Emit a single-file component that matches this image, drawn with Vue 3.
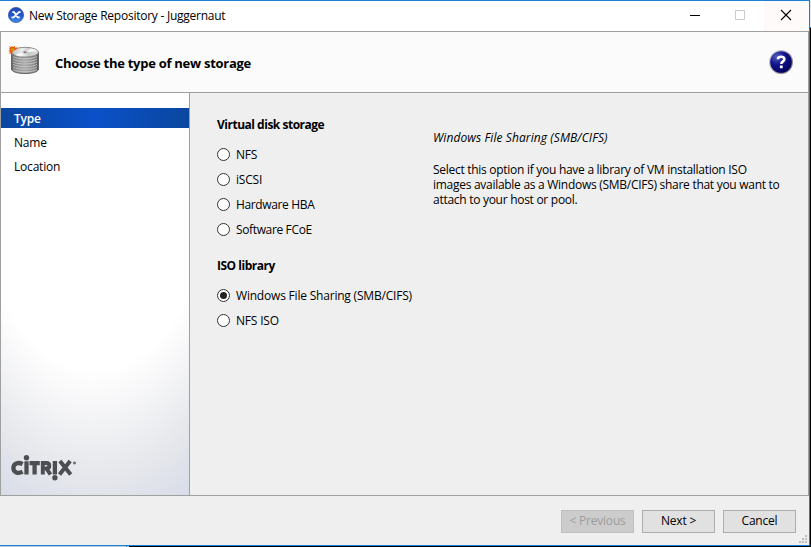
<script setup>
import { ref } from 'vue'

const steps = ['Type', 'Name', 'Location']
const active = ref('Type')
const selected = ref('cifs')
const groups = [
  {
    title: 'Virtual disk storage',
    cls: 'disk',
    options: [
      { id: 'nfs', label: 'NFS' },
      { id: 'iscsi', label: 'iSCSI' },
      { id: 'hba', label: 'Hardware HBA' },
      { id: 'fcoe', label: 'Software FCoE' },
    ],
  },
  {
    title: 'ISO library',
    cls: 'iso',
    options: [
      { id: 'cifs', label: 'Windows File Sharing (SMB/CIFS)' },
      { id: 'nfsiso', label: 'NFS ISO' },
    ],
  },
]
const description = [
  'Select this option if you have a library of VM installation ISO',
  'images available as a Windows (SMB/CIFS) share that you want to',
  'attach to your host or pool.',
]
const platterEdges = [0, 1, 2, 3, 4, 5]
</script>

<template>
  <div class="desktop">
    <div class="window">
      <header class="titlebar">
        <svg class="app-icon" width="16" height="16" viewBox="0 0 16 16">
          <defs>
            <linearGradient id="appBlue" x1="0" y1="0" x2="0" y2="1">
              <stop offset="0" stop-color="#2348b4" />
              <stop offset="0.55" stop-color="#2458cf" />
              <stop offset="1" stop-color="#3f92ee" />
            </linearGradient>
          </defs>
          <circle cx="8" cy="8" r="7.6" fill="url(#appBlue)" stroke="#2a4c9c" stroke-width=".7" />
          <path d="M4.300 5.200h1.900L9.600 10.300h2.100M12.600 5.200h-1.800L5.800 10.300H3.500" fill="none" stroke="#fff" stroke-width="1.700" />
        </svg>
        <span class="title">New Storage Repository - Juggernaut</span>
        <div class="controls">
          <span class="control"><svg width="12" height="12"><path d="M1 6.5h10" stroke="#000" /></svg></span>
          <span class="control"><svg width="12" height="12"><path d="M1.5 1.5h9v9h-9z" fill="none" stroke="#ccc" /></svg></span>
          <span class="control close"><svg width="12" height="12"><path d="M1 1l10 10M11 1L1 11" stroke="#000" stroke-width="1.1" /></svg></span>
        </div>
      </header>

      <section class="banner">
        <svg class="disk-icon" width="32" height="32" viewBox="0 0 32 32">
          <defs>
            <linearGradient id="side" x1="0" x2="1">
              <stop offset="0" stop-color="#666" />
              <stop offset="0.2" stop-color="#909090" />
              <stop offset="0.5" stop-color="#aaa" />
              <stop offset="0.85" stop-color="#888" />
              <stop offset="1" stop-color="#555" />
            </linearGradient>
            <linearGradient id="top" x1="0" x2="1">
              <stop offset="0" stop-color="#bbb" />
              <stop offset="0.4" stop-color="#eee" />
              <stop offset="0.65" stop-color="#c9c9c9" />
              <stop offset="1" stop-color="#ddd" />
            </linearGradient>
          </defs>
          <path d="M3.500 6v17c0 2.700 5.600 4.500 13.500 4.500s13.500-1.800 13.500-4.500V6z" fill="url(#side)" stroke="#666" />
          <path v-for="i in platterEdges" :key="i" :transform="`translate(0 ${i * 2.6})`" d="M5 10.500c3 3 21 3 24 0" fill="none" stroke="#c6c6c6" stroke-width=".9" />
          <ellipse cx="17" cy="6.200" rx="13.500" ry="4.900" fill="url(#top)" stroke="#777" stroke-width=".8" />
          <path d="M17 6L7 8.500c1.500 1 3.500 1.700 6 2zM17 6l6-3.500c3 .6 5 1.500 6 2.700z" fill="#f7f7f7" />
          <ellipse cx="17" cy="6.200" rx="3" ry="1.100" fill="#ddd" stroke="#999" stroke-width=".4" />
          <ellipse cx="17" cy="6.200" rx="1.300" ry=".6" fill="#555" />
          <path d="M1 0l2 1 1-1 1 1 2-1v2l2-1-.5 2.500L7 4 5 5 4 7 2.500 7.500 1 8l1-2-1.500-1L2 4 1 2.500 2 2z" fill="#f35b0c" />
          <circle cx="4.600" cy="3.700" r="1.400" fill="#b8a400" />
        </svg>
        <h1>Choose the type of new storage</h1>
        <svg class="help" width="24" height="24" viewBox="0 0 24 24">
          <defs>
            <linearGradient id="ring" x1="0" y1="0" x2="1" y2="1">
              <stop offset="0" stop-color="#e0e0e6" />
              <stop offset="1" stop-color="#686870" />
            </linearGradient>
            <radialGradient id="ball" cx=".3" cy=".25" r=".8">
              <stop offset="0" stop-color="#5360bd" />
              <stop offset="0.45" stop-color="#15158e" />
              <stop offset="1" stop-color="#00005e" />
            </radialGradient>
          </defs>
          <circle cx="12" cy="12" r="12" fill="url(#ring)" />
          <circle cx="12" cy="12" r="10.800" fill="url(#ball)" />
          <path d="M8.900 9.200c.1-3.300 6.600-3.300 6.500.1 0 2-3.100 2.200-3.100 4.700" fill="none" stroke="#fff" stroke-width="2.600" />
          <rect x="10.900" y="15.500" width="2.800" height="2.700" fill="#fff" />
        </svg>
      </section>

      <main class="body">
        <nav class="sidebar">
          <ul>
            <li v-for="step in steps" :key="step" :class="{ active: step === active }"><span>{{ step }}</span></li>
          </ul>
          <svg class="brand" width="67" height="28" viewBox="0 0 67 28">
            <g fill="none" stroke="#4d4e53" stroke-width="4.300">
              <path d="M11.600 9.200C7 6.600 2.400 8.700 2.400 13s4.600 6.300 9.200 3.700" />
              <path d="M15.500 6.300V19.500" />
              <path d="M18.500 8.200h10.300M23.600 7v12.500" />
              <path d="M31.800 19.500V8h3.500c4 0 4 5.400 0 5.400H32M35.300 13.300L39.500 19.500" stroke-width="3.900" />
              <path d="M43.900 6v13.500" />
              <path d="M48.900 6L59.700 19.500M59.200 6L48.500 19.500" stroke-width="4" />
            </g>
            <circle cx="15.500" cy="2.800" r="2.700" fill="#4d4e53" />
            <circle cx="43.900" cy="22.800" r="2.700" fill="#4d4e53" />
            <circle cx="63.500" cy="8" r="1.200" fill="#77787c" stroke="#55565b" stroke-width=".5" />
          </svg>
        </nav>

        <div class="content">
          <form class="options">
            <fieldset v-for="g in groups" :key="g.title" :class="g.cls">
              <h2>{{ g.title }}</h2>
              <label v-for="o in g.options" :key="o.id" :class="o.id" @click="selected = o.id">
                <i class="radio" :class="{ on: selected === o.id }"></i><span>{{ o.label }}</span>
              </label>
            </fieldset>
          </form>
          <article class="description">
            <h3>Windows File Sharing (SMB/CIFS)</h3>
            <p v-for="line in description" :key="line">{{ line }}</p>
          </article>
        </div>
      </main>

      <footer class="footer">
        <button disabled>&lt; Previous</button>
        <button>Next &gt;</button>
        <button>Cancel</button>
        <svg class="grip" width="8" height="8" fill="#bfbfbf">
          <path d="M6 0h2v2H6zM3 3h2v2H3zM6 3h2v2H6zM0 6h2v2H0zM3 6h2v2H3zM6 6h2v2H6z" />
        </svg>
      </footer>
    </div>
  </div>
</template>

<style>
body { margin: 0; overflow: hidden; }
</style>

<style scoped>
* { box-sizing: border-box; }
.desktop {
  width: 811px;
  height: 547px;
  background:
    linear-gradient(#1b7cca, #1b7cca) 126px 546px / 1px 1px no-repeat,
    linear-gradient(#b9cfe0, #b9cfe0) 0 546px / 129px 1px no-repeat,
    linear-gradient(#d9e9f5, #d9e9f5) 810px 0 / 1px 27px no-repeat,
    linear-gradient(#1b7cca, #1b7cca) 810px 27px / 1px 1px no-repeat,
    #000;
  font: 12px/15px "Open Sans", "Noto Sans", sans-serif;
  color: #000;
  letter-spacing: -.2px;
}
.window {
  width: 810px;
  height: 546px;
  display: flex;
  flex-direction: column;
  border: solid #1b7fd3;
  border-width: 1px 1px 1px 0;
  background: #efefef;
}
.titlebar { display: flex; height: 30px; background: #fff; }
.app-icon { margin: 6px 5px 0 8px; }
.title { margin-top: 7px; white-space: nowrap; letter-spacing: -.25px; }
.controls { display: flex; margin-left: auto; }
.control { width: 45px; height: 30px; padding: 8px 0 0 15px; }
.control svg { display: block; }
.close { padding-left: 16px; background: #fffafa; }
.banner {
  display: flex;
  height: 62px;
  border: 1px solid #a0a0a0;
  background: #fbfbfb;
}
.disk-icon { margin: 14px 0 0 7px; }
h1 { margin: 24px 0 0 15px; font: inherit; font-size: 13px; font-weight: 700; letter-spacing: -.27px; white-space: nowrap; }
.help { margin: 18px 15px 0 auto; }
.body { display: flex; height: 403px; border: 1px solid #a0a0a0; border-top: 0; }
.sidebar {
  display: flex;
  flex-direction: column;
  justify-content: space-between;
  width: 189px;
  border-right: 1px solid #a0a0a0;
  background: radial-gradient(ellipse 223px 445px at 50% 0, #fff 62%, #e8e9ed 84%, #d7dce7 100%);
}
ul { margin: 15px 0 0; padding: 0; list-style: none; }
li { height: 20px; margin-bottom: 4px; padding: 3px 0 0 13px; }
.active { color: #fff; font-weight: 600; background: linear-gradient(90deg, #0a479f, #0b50c9 50%, #0a479f); }
.brand { margin: 0 0 12px 10px; }
.content { display: flex; flex: 1; }
.options { width: 243px; padding: 24px 0 0 27px; }
fieldset { margin: 0; padding: 0; border: 0; }
.iso { margin-top: 14px; }
h2 { margin: 0 0 12px; font: inherit; font-weight: 700; letter-spacing: -.49px; white-space: nowrap; }
label { display: flex; height: 25px; padding-top: 3px; white-space: nowrap; }
.hba, .fcoe { letter-spacing: -.36px; }
.radio { display: grid; place-items: center; width: 13px; height: 13px; margin: 1px 6px 0 0; border: 1px solid #333; border-radius: 50%; background: #fff; }
.on::after { content: ""; width: 7px; height: 7px; border-radius: 50%; background: #222; }
.description { padding-top: 37px; white-space: nowrap; }
h3 { margin: 0 0 17px; font: inherit; font-style: italic; letter-spacing: .09px; }
p { margin: 0; letter-spacing: -.28px; }
.footer { display: flex; flex: 1; justify-content: flex-end; gap: 8px; padding-top: 14px; }
button { width: 73px; height: 23px; padding: 0 0 2px; border: 1px solid #adadad; background: #e1e1e1; color: #000; font: inherit; letter-spacing: inherit; }
button:disabled { border-color: #bfbfbf; background: #ccc; color: #9d9d9d; }
.grip { margin: 25px 2px 0 -5px; }
</style>
